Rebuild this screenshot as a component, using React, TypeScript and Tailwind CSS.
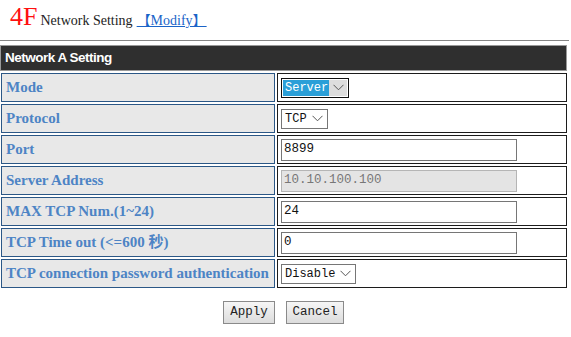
import React from "react";

const labelFont = { fontFamily: '"Liberation Serif", "Noto Sans CJK SC", serif' };

function Chevron() {
  return (
    <svg width="11" height="7" viewBox="0 0 11 7" className="shrink-0">
      <polyline points="0.5,0.8 5.5,5.8 10.5,0.8" fill="none" stroke="#555" strokeWidth="1" />
    </svg>
  );
}

function Select({ value, width, focused }: { value: string; width: string; focused?: boolean }) {
  if (focused) {
    return (
      <div className={`${width} h-[20px] border border-[#111] bg-white flex items-stretch p-[1px]`}>
        <div className="w-[46px] shrink-0 bg-[#2a9fd8] text-white flex items-center pl-[2px] font-['Liberation_Mono',monospace] text-[12px]">
          {value}
        </div>
        <div className="flex-1 bg-[#dddddd] flex items-center justify-center">
          <Chevron />
        </div>
      </div>
    );
  }
  return (
    <div className={`${width} h-[20px] border border-[#767676] bg-white flex items-center justify-between pl-[3px] pr-[4px] font-['Liberation_Mono',monospace] text-[12px] text-[#111]`}>
      <span>{value}</span>
      <Chevron />
    </div>
  );
}

function TextBox({ value, disabled }: { value: string; disabled?: boolean }) {
  return (
    <div
      className={`w-[236px] h-[22px] border flex items-center pl-[2px] font-['Liberation_Mono',monospace] text-[12.5px] ${
        disabled ? "bg-[#e4e4e4] border-[#b5b5b5] text-[#777]" : "bg-white border-[#767676] text-[#111]"
      }`}
    >
      {value}
    </div>
  );
}

function Row({ label, children }: { label: string; children: React.ReactNode }) {
  return (
    <div className="flex gap-[2px] h-[29px]">
      <div
        className="w-[274px] shrink-0 border border-[#2b5786] bg-[#e8e8e8] flex items-center pl-[4px] text-[15px] font-bold text-[#4d84c5] whitespace-nowrap"
        style={labelFont}
      >
        {label}
      </div>
      <div className="flex-1 border border-[#1c1c1c] bg-white flex items-center pl-[3px]">{children}</div>
    </div>
  );
}

export default function App() {
  return (
    <div className="w-[571px] h-[337px] bg-white overflow-hidden">
      <div className="h-[40px] pl-[10px] pt-[4px] flex items-baseline" style={labelFont}>
        <span className="text-[26px] leading-[26px] text-[#ff1010]">4F</span>
        <span className="ml-[3px] text-[14px] text-[#222]">Network Setting</span>
        <a className="ml-[4px] text-[14px] text-[#1a64c8] underline">【Modify】</a>
      </div>
      <div className="h-px w-[569px] bg-[#858585]" />
      <div className="w-[567px] mt-[4px] flex flex-col gap-[2px] pl-[1px]">
        <div className="-ml-[1px] h-[26px] border border-[#999] bg-[#2f2f2f] flex items-center pl-[4px] text-white font-bold text-[13.5px] font-['Liberation_Sans',sans-serif] tracking-[-0.5px]">
          Network A Setting
        </div>
        <Row label="Mode">
          <Select value="Server" width="w-[68px]" focused />
        </Row>
        <Row label="Protocol">
          <Select value="TCP" width="w-[47px]" />
        </Row>
        <Row label="Port">
          <TextBox value="8899" />
        </Row>
        <Row label="Server Address">
          <TextBox value="10.10.100.100" disabled />
        </Row>
        <Row label="MAX TCP Num.(1~24)">
          <TextBox value="24" />
        </Row>
        <Row label="TCP Time out (<=600 秒)">
          <TextBox value="0" />
        </Row>
        <Row label="TCP connection password authentication">
          <Select value="Disable" width="w-[75px]" />
        </Row>
      </div>
      <div className="w-[567px] flex justify-center gap-[11px] mt-[13px]">
        <button className="w-[52px] h-[23px] border border-[#8a8a8a] bg-gradient-to-b from-[#f6f6f6] to-[#dcdcdc] font-['Liberation_Mono',monospace] text-[12.5px] text-[#222]">
          Apply
        </button>
        <button className="w-[58px] h-[23px] border border-[#8a8a8a] bg-gradient-to-b from-[#f6f6f6] to-[#dcdcdc] font-['Liberation_Mono',monospace] text-[12.5px] text-[#222]">
          Cancel
        </button>
      </div>
    </div>
  );
}
